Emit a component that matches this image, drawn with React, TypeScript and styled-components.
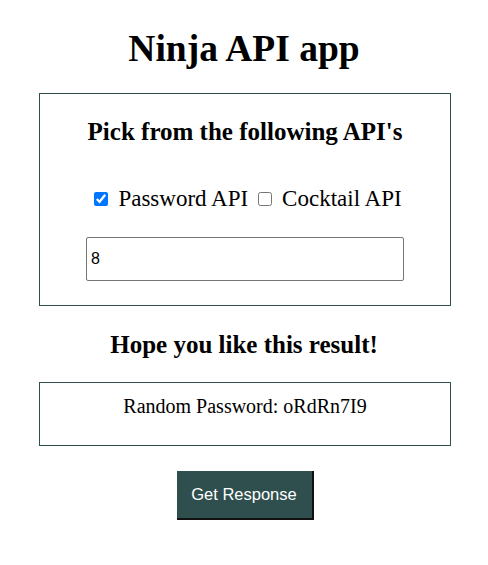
import React, { useState } from "react";
import styled, { createGlobalStyle } from "styled-components";

const GlobalStyle = createGlobalStyle`
  body {
    margin: 8px;
    background: #ffffff;
    font-family: "Liberation Serif", "Times New Roman", serif;
    color: #000;
  }
`;

const Page = styled.div`
  display: flex;
  flex-direction: column;
  align-items: center;
`;

const Title = styled.h1`
  font-size: 37.5px;
  font-weight: bold;
  margin: 19px 0 23px;
  line-height: 1.15;
`;

const Panel = styled.div<{ $pad: string }>`
  box-sizing: border-box;
  width: 412px;
  margin-left: 2px;
  border: 1px solid #2f4f4f;
  display: flex;
  flex-direction: column;
  align-items: center;
  padding: ${(p) => p.$pad};
`;

const Heading = styled.h2<{ $m: string }>`
  font-size: 25px;
  font-weight: bold;
  margin: ${(p) => p.$m};
  line-height: 1.15;
`;

const Options = styled.div`
  display: flex;
  align-items: center;
  font-size: 23px;
  line-height: 1.15;
  margin-top: 39px;
  margin-left: 2px;
`;

const Option = styled.label`
  display: flex;
  align-items: center;
  & + & {
    margin-left: 6px;
  }
`;

const Check = styled.input`
  margin: 3px 10px 3px 4px;
  width: 14px;
  height: 14px;
`;

const LimitInput = styled.input`
  box-sizing: border-box;
  width: 318px;
  height: 44px;
  margin-top: 25px;
  padding: 0 4px;
  font-family: "Liberation Sans", Arial, sans-serif;
  font-size: 16px;
  border: 1px solid #767676;
  border-radius: 2px;
`;

const ResultText = styled.p`
  margin: 0;
  font-size: 20px;
  line-height: 1.15;
`;

const Button = styled.button`
  margin-top: 25px;
  margin-left: 2px;
  width: 137px;
  height: 49px;
  background: #2f4f4f;
  color: #ffffff;
  font-family: "Liberation Sans", Arial, sans-serif;
  font-size: 16.5px;
  border: none;
  border-right: 2px solid #111;
  border-bottom: 2px solid #111;
  cursor: pointer;
`;

export default function App() {
  const [pw, setPw] = useState(true);
  const [ck, setCk] = useState(false);
  const [len, setLen] = useState("8");
  return (
    <>
      <GlobalStyle />
      <Page>
        <Title>Ninja API app</Title>
        <Panel $pad="24px 0 24px">
          <Heading $m="0">Pick from the following API's</Heading>
          <Options>
            <Option>
              <Check type="checkbox" checked={pw} onChange={() => setPw(!pw)} />
              Password API
            </Option>
            <Option>
              <Check type="checkbox" checked={ck} onChange={() => setCk(!ck)} />
              Cocktail API
            </Option>
          </Options>
          <LimitInput value={len} onChange={(e) => setLen(e.target.value)} />
        </Panel>
        <Heading $m="24.5px 0 22.5px">Hope you like this result!</Heading>
        <Panel $pad="11.5px 0 27.5px">
          <ResultText>Random Password: oRdRn7I9</ResultText>
        </Panel>
        <Button>Get Response</Button>
      </Page>
    </>
  );
}
